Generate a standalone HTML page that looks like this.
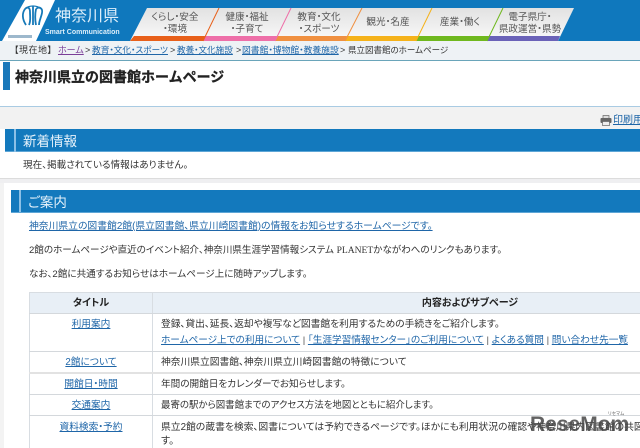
<!DOCTYPE html>
<html lang="ja"><head><meta charset="utf-8"><title>神奈川県立の図書館ホームページ</title>
<style>
html,body{margin:0;padding:0;background:#fff}
#p{position:relative;width:640px;height:448px;overflow:hidden;background:#fff;font-family:"Liberation Sans","Noto Sans CJK JP",sans-serif;font-size:10px;color:#333;font-feature-settings:"palt";filter:blur(.3px)}
#p div,#p a,#p svg{position:absolute}
.t{white-space:nowrap;line-height:14px;height:14px}
#p a{color:#1f66a8;text-decoration:underline;white-space:nowrap;line-height:14px;height:14px}
#p a.i{position:static}
.c{text-align:center}
.nv{font-size:9.6px;line-height:11.5px;color:#555;text-align:center;white-space:nowrap}
</style></head><body><div id="p">
<svg style="left:0;top:0" width="640" height="62" viewBox="0 0 640 62">
<defs><linearGradient id="g" x1="0" y1="0" x2="0" y2="1"><stop offset="0" stop-color="#e2e2e2"/><stop offset="1" stop-color="#fafafa"/></linearGradient></defs>
<rect width="640" height="41" fill="#0f78bd"/>
<rect y="41" width="640" height="19" fill="#eef2f5"/>
<rect y="60" width="640" height="1" fill="#6aa5ba"/>
<polygon points="25,0 55,0 36,41 2,41" fill="#fff"/>
<rect x="8" y="35" width="24" height="3" fill="#9db8cc"/>
<g fill="none" stroke="#1679b8" stroke-width="1.8">
<path d="M25 9C22 13 22 19 26 25"/><path d="M25 9C28 6 30 8 30 12C30 17 31 21 29 25"/>
<path d="M33 6V25"/>
<path d="M36 9C35 14 35 20 36 25"/><path d="M36 9C39 6 43 8 42 13C41 18 39 21 39 25"/>
<path d="M25 9C29 5 37 5 41 9" stroke-width="1.2"/>
</g>
<polygon points="147,8 574,8 558,41 130,41" fill="url(#g)"/>
<polygon points="134,36 205,36 203,41 130,41" fill="#e8601a"/>
<polygon points="205,36 277,36 275,41 203,41" fill="#ee6fa8"/>
<polygon points="277,36 347,36 345,41 275,41" fill="#f09040"/>
<polygon points="347,36 418,36 416,41 345,41" fill="#f5b21a"/>
<polygon points="418,36 489,36 487,41 416,41" fill="#6fb81e"/>
<polygon points="489,36 560,36 558,41 487,41" fill="#6a62b8"/>
<g stroke-width="1" fill="none">
<path d="M219 8L203 41" stroke="#e8601a"/>
<path d="M291 8L275 41" stroke="#ee6fa8"/>
<path d="M362 8L345 41" stroke="#f09040"/>
<path d="M432 8L416 41" stroke="#f5b21a"/>
<path d="M503 8L487 41" stroke="#6fb81e"/>
</g>
</svg>
<div class="t" style="left:55px;top:6px;font-size:16px;line-height:22px;height:22px;color:#dceefa">神奈川県</div>
<div class="t" style="left:45px;top:27px;font-size:7px;line-height:12px;height:12px;color:#dceefa;font-weight:bold">Smart Communication</div>
<div class="nv" style="left:140px;top:12px;width:70px">くらし・安全<br>・環境</div>
<div class="nv" style="left:212px;top:12px;width:70px">健康・福祉<br>・子育て</div>
<div class="nv" style="left:284px;top:12px;width:70px">教育・文化<br>・スポーツ</div>
<div class="nv" style="left:353px;top:17px;width:70px">観光・名産</div>
<div class="nv" style="left:425px;top:17px;width:70px">産業・働く</div>
<div class="nv" style="left:493px;top:12px;width:74px">電子県庁・<br>県政運営・県勢</div>
<div class="t" style="left:14px;top:43px;font-size:9px;color:#333;letter-spacing:.5px">【現在地】</div>
<a style="left:58px;top:43px;font-size:9px;color:#7b3f98">ホーム</a>
<div class="t" style="left:85px;top:43px;font-size:9px">&gt;</div>
<a style="left:92px;top:43px;font-size:8.7px">教育・文化・スポーツ</a>
<div class="t" style="left:170px;top:43px;font-size:9px">&gt;</div>
<a style="left:177px;top:43px;font-size:8.6px">教養・文化施設</a>
<div class="t" style="left:236px;top:43px;font-size:9px">&gt;</div>
<a style="left:242px;top:43px;font-size:8.8px">図書館・博物館・教養施設</a>
<div class="t" style="left:340px;top:43px;font-size:9px">&gt;</div>
<div class="t" style="left:348px;top:43px;font-size:8.5px">県立図書館のホームページ</div>
<div style="left:3px;top:62px;width:7px;height:28px;background:#1a78ba"></div>
<div class="t" style="left:15px;top:68px;font-size:14px;line-height:18px;height:18px;font-weight:bold;color:#222;font-feature-settings:normal;-webkit-text-stroke:.3px #222">神奈川県立の図書館ホームページ</div>
<div style="left:0;top:106px;width:640px;height:1px;background:#a9cbe3"></div>
<div style="left:0;top:107px;width:640px;height:22px;background:#f2f2f2"></div>
<svg style="left:600px;top:115px" width="12" height="11" viewBox="0 0 12 11"><rect x="3" y="0.5" width="6" height="3" fill="#ddd" stroke="#666" stroke-width=".7"/><rect x="0.5" y="3" width="11" height="5" rx="1" fill="#666"/><rect x="2.5" y="6.5" width="7" height="4" fill="#eee" stroke="#666" stroke-width=".7"/></svg>
<a style="left:613px;top:114px;font-size:10px">印刷用</a>
<div style="left:5px;top:129px;width:635px;height:23px;background:#1379bd;border-bottom:1px solid #5ea6d6;box-sizing:border-box"></div>
<div style="left:14px;top:129px;width:2px;height:23px;background:#8cc0e6"></div>
<div class="t" style="left:23px;top:133px;font-size:13.5px;line-height:17px;height:17px;color:#e6f2fb">新着情報</div>
<div class="t" style="left:23px;top:159px;font-size:9.6px">現在、掲載されている情報はありません。</div>
<div style="left:0;top:178px;width:640px;height:5px;background:#efeff1;border-top:1px solid #dcdcdc;box-sizing:border-box"></div>
<div style="left:0;top:183px;width:4px;height:265px;background:#f3f3f3"></div>
<div style="left:11px;top:190px;width:629px;height:23px;background:#1379bd;border-bottom:1px solid #5ea6d6;box-sizing:border-box"></div>
<div style="left:19px;top:190px;width:2px;height:22px;background:#8cc0e6"></div>
<div class="t" style="left:28px;top:194px;font-size:13.5px;line-height:17px;height:17px;color:#e6f2fb">ご案内</div>
<a style="left:29px;top:220px;font-size:9.8px">神奈川県立の図書館2館(県立図書館、県立川崎図書館)の情報をお知らせするホームページです。</a>
<div class="t" style="left:29px;top:244px;font-size:9.55px">2館のホームページや直近のイベント紹介、神奈川県生涯学習情報システム <span style="font-family:'Liberation Serif',serif">PLANET</span>かながわへのリンクもあります。</div>
<div class="t" style="left:29px;top:268px;font-size:9.6px">なお、2館に共通するお知らせはホームページ上に随時アップします。</div>
<div style="left:29px;top:292px;width:611px;height:1px;background:#d8dde2"></div>
<div style="left:29px;top:293px;width:611px;height:20px;background:#e8eff6"></div>
<div style="left:29px;top:292px;width:1px;height:156px;background:#d8dde2"></div>
<div style="left:152px;top:292px;width:1px;height:156px;background:#d8dde2"></div>
<div style="left:29px;top:313px;width:611px;height:1px;background:#d4d8dc"></div>
<div style="left:29px;top:351px;width:611px;height:1px;background:#d4d8dc"></div>
<div style="left:29px;top:372px;width:611px;height:2px;background:#e2e2e2"></div>
<div style="left:29px;top:394px;width:611px;height:1px;background:#d4d8dc"></div>
<div style="left:29px;top:415px;width:611px;height:1px;background:#d4d8dc"></div>
<div class="t c" style="left:30px;top:297px;width:122px;font-size:10px;font-weight:bold;color:#222">タイトル</div>
<div class="t c" style="left:153px;top:297px;width:634px;font-size:10px;font-weight:bold;color:#222">内容およびサブページ</div>
<a class="c" style="left:30px;top:318px;width:122px;font-size:9.7px">利用案内</a>
<a class="c" style="left:30px;top:356px;width:122px;font-size:9.7px">2館について</a>
<a class="c" style="left:30px;top:378px;width:122px;font-size:9.7px">開館日・時間</a>
<a class="c" style="left:30px;top:399px;width:122px;font-size:9.7px">交通案内</a>
<a class="c" style="left:30px;top:421px;width:122px;font-size:9.7px">資料検索・予約</a>
<div class="t" style="left:161px;top:318px;font-size:9.75px">登録、貸出、延長、返却や複写など図書館を利用するための手続きをご紹介します。</div>
<div class="t" style="left:161px;top:334px;font-size:9.65px;color:#555"><a class="i">ホームページ上での利用について</a> | <a class="i">「生涯学習情報センター」のご利用について</a> | <a class="i">よくある質問</a> | <a class="i">問い合わせ先一覧</a></div>
<div class="t" style="left:161px;top:356px;font-size:9.75px">神奈川県立図書館、神奈川県立川崎図書館の特徴について</div>
<div class="t" style="left:161px;top:378px;font-size:9.63px">年間の開館日をカレンダーでお知らせします。</div>
<div class="t" style="left:161px;top:399px;font-size:9.45px">最寄の駅から図書館までのアクセス方法を地図とともに紹介します。</div>
<div class="t" style="left:161px;top:421px;font-size:9.8px">県立2館の蔵書を検索、図書については予約できるページです。ほかにも利用状況の確認や神奈川県内図書館の共図</div>
<div class="t" style="left:161px;top:435px;font-size:10px">す。</div>
<div class="t" style="left:530px;top:411px;font-size:21px;line-height:28px;height:28px;font-weight:bold;color:rgba(70,70,70,.85)">ReseMom</div>
<div class="t" style="left:608px;top:411px;font-size:4.5px;line-height:6px;height:6px;color:#666">リセマム</div>
</div></body></html>
